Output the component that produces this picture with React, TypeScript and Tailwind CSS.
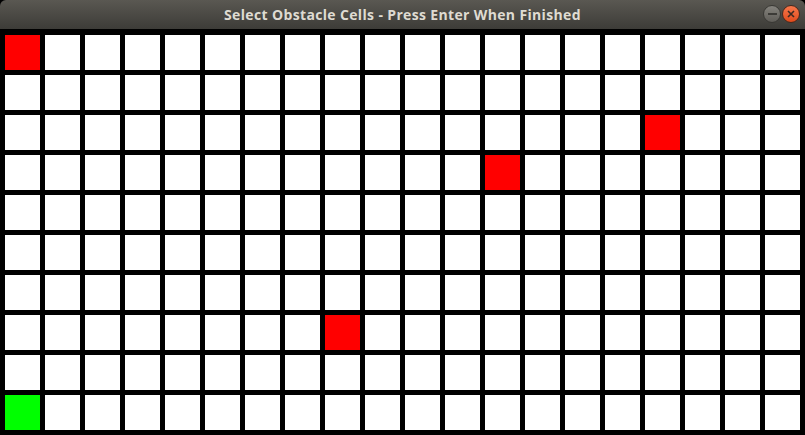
const ROWS = 10;
const COLS = 20;

// obstacle / start cells, keyed by "row-col"
const cellColors: Record<string, string> = {
  '0-0': 'bg-[#ff0000]',
  '2-16': 'bg-[#ff0000]',
  '3-12': 'bg-[#ff0000]',
  '7-8': 'bg-[#ff0000]',
  '9-0': 'bg-[#00ff00]',
};

const App = () => {
  const cells = [];
  for (let r = 0; r < ROWS; r++) {
    for (let c = 0; c < COLS; c++) {
      const color = cellColors[`${r}-${c}`] ?? 'bg-white';
      cells.push(<div key={`${r}-${c}`} className={`w-[35px] h-[35px] ${color}`} />);
    }
  }

  return (
    <div className="w-[805px] h-[435px] bg-black flex flex-col overflow-hidden">
      <div className="h-[29px] shrink-0 rounded-t-[6px] bg-gradient-to-b from-[#5a5852] to-[#3d3c38] flex items-center justify-center relative">
        <span
          className="text-[14px] font-bold text-[#dfdbd2] tracking-[0.35px]"
          style={{ fontFamily: '"Open Sans", "Noto Sans", sans-serif' }}
        >
          Select Obstacle Cells - Press Enter When Finished
        </span>
        <div className="absolute right-[5px] top-[5px] flex gap-[1px]">
          <div className="w-[18px] h-[18px] rounded-full bg-gradient-to-b from-[#85837d] to-[#5f5d58] border border-[#3a3935] flex items-center justify-center">
            <div className="w-[9px] h-[2px] bg-[#3c3b37]" />
          </div>
          <div className="w-[18px] h-[18px] rounded-full bg-gradient-to-b from-[#f7774a] to-[#e04a1a] border border-[#4a2a1e] flex items-center justify-center">
            <svg width="8" height="8" viewBox="0 0 8 8">
              <path d="M1 1L7 7M7 1L1 7" stroke="#3c2a22" strokeWidth="1.6" />
            </svg>
          </div>
        </div>
      </div>
      <div className="pt-[6px] pl-[5px] grid grid-cols-[repeat(20,35px)] gap-[5px]">
        {cells}
      </div>
    </div>
  );
};

export default App;
